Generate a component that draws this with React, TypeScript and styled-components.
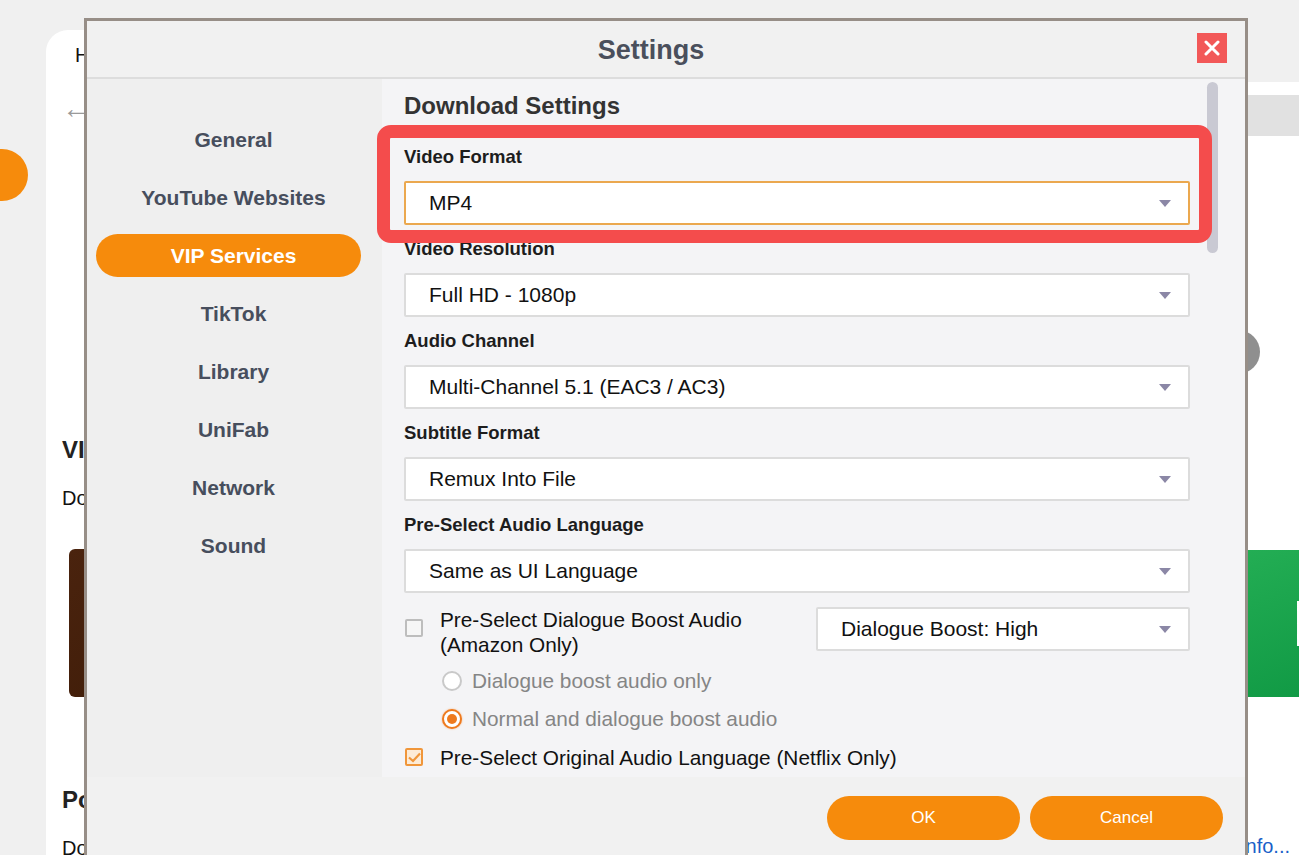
import React from "react";
import styled, { createGlobalStyle } from "styled-components";

const GlobalStyle = createGlobalStyle`
  html, body {
    margin: 0;
    padding: 0;
    background: #f0f0f0;
    font-family: "Liberation Sans", Arial, sans-serif;
    overflow: hidden;
  }
  * { box-sizing: border-box; }
`;

const menuItems = [
  "General",
  "YouTube Websites",
  "VIP Services",
  "TikTok",
  "Library",
  "UniFab",
  "Network",
  "Sound",
];

const selects = [
  { label: "Video Format", value: "MP4", focused: true },
  { label: "Video Resolution", value: "Full HD - 1080p" },
  { label: "Audio Channel", value: "Multi-Channel 5.1 (EAC3 / AC3)" },
  { label: "Subtitle Format", value: "Remux Into File" },
  { label: "Pre-Select Audio Language", value: "Same as UI Language" },
];

/* ---------- page behind the dialog ---------- */

const Page = styled.div`
  position: relative;
  width: 1299px;
  height: 855px;
  display: flex;
  padding: 30px 0 0 46px;
  overflow: hidden;
`;

const LeftPane = styled.div`
  width: 700px;
  background: #fff;
  border-radius: 22px 0 0 0;
  padding: 14px 0 0 16px;
  display: flex;
  flex-direction: column;
  color: #111;
`;

const PaneTab = styled.div`
  font-size: 20px;
  padding-left: 13px;
  height: 26px;
`;

const BackArrow = styled.div`
  margin-top: 22px;
  color: #9a9a9a;
  font-size: 28px;
  line-height: 40px;
  height: 40px;
`;

const PaneHeading = styled.div<{ $top: number }>`
  margin-top: ${(p) => p.$top}px;
  font-size: 24px;
  font-weight: bold;
  color: #222;
  line-height: 30px;
`;

const PaneText = styled.div`
  margin-top: 20px;
  font-size: 20px;
  line-height: 26px;
`;

const Poster = styled.div`
  margin: 38px 0 0 7px;
  width: 200px;
  height: 148px;
  flex-shrink: 0;
  border-radius: 6px;
  background: linear-gradient(135deg, #4a230e, #3b1a06);
`;

const RightPane = styled.div`
  flex: 1;
  margin-top: 52px;
  background: #fff;
  display: flex;
  flex-direction: column;
  position: relative;
`;

const SearchStrip = styled.div`
  margin: 13px 0 0 150px;
  height: 41px;
  background: #e1e1e1;
`;

const Banner = styled.div`
  margin: 414px 0 0 250px;
  height: 147px;
  background: linear-gradient(160deg, #2db85c, #119a45);
  display: flex;
  align-items: center;
  justify-content: flex-end;
  overflow: hidden;
`;

const BannerMark = styled.span`
  color: #fff;
  font-size: 64px;
  font-weight: bold;
  margin-right: -40px;
`;

const MoreLink = styled.div`
  margin-top: auto;
  align-self: flex-end;
  margin-right: 9px;
  color: #1a5fc8;
  font-size: 20px;
  line-height: 24px;
  margin-bottom: -3px;
`;

const CarouselDot = styled.div`
  position: absolute;
  left: 470px;
  top: 248px;
  width: 44px;
  height: 44px;
  border-radius: 50%;
  background: #8f8f8f;
`;

const FloatingBubble = styled.div`
  position: absolute;
  left: -24px;
  top: 149px;
  width: 52px;
  height: 52px;
  border-radius: 50%;
  background: #f68b0c;
`;

/* ---------- dialog ---------- */

const Dialog = styled.div`
  position: absolute;
  left: 84px;
  top: 18px;
  width: 1164px;
  height: 880px;
  border: 3px solid #978e87;
  background: #f1f1f1;
  display: flex;
  flex-direction: column;
`;

const TitleBar = styled.div`
  position: relative;
  height: 58px;
  border-bottom: 2px solid #dddddd;
  display: flex;
  align-items: center;
  justify-content: center;
  padding-right: 30px;
`;

const Title = styled.div`
  font-size: 27px;
  font-weight: bold;
  color: #4a4f5c;
  margin-top: 2px;
`;

const CloseButton = styled.div`
  position: absolute;
  right: 18px;
  top: 12px;
  width: 30px;
  height: 30px;
  background: #f25858;
  display: flex;
  align-items: center;
  justify-content: center;
`;

const Body = styled.div`
  position: relative;
  height: 698px;
  display: flex;
`;

const Sidebar = styled.div`
  width: 295px;
  background: #efefef;
  padding: 39px 21px 0 9px;
  display: flex;
  flex-direction: column;
  gap: 15px;
`;

const MenuItem = styled.div<{ $active?: boolean }>`
  height: 43px;
  border-radius: 22px;
  display: flex;
  align-items: center;
  justify-content: center;
  font-size: 21px;
  font-weight: bold;
  color: ${(p) => (p.$active ? "#fff" : "#474e5d")};
  background: ${(p) => (p.$active ? "#f68b0c" : "transparent")};
  padding-left: 10px;
`;

const Content = styled.div`
  position: relative;
  flex: 1;
  background: #f4f4f6;
  padding: 14px 55px 0 22px;
  overflow: hidden;
`;

const SectionTitle = styled.div`
  font-size: 24px;
  font-weight: bold;
  color: #333;
  line-height: 26px;
  margin-bottom: 28px;
`;

const FieldLabel = styled.div`
  font-size: 18.5px;
  font-weight: bold;
  color: #1d1d1d;
  line-height: 20px;
  margin-bottom: 14px;
`;

const SelectBox = styled.div<{ $focused?: boolean; $width?: number }>`
  height: 44px;
  width: ${(p) => (p.$width ? `${p.$width}px` : "100%")};
  background: #fff;
  border: 2px solid ${(p) => (p.$focused ? "#eba84f" : "#dcdcdc")};
  border-radius: 2px;
  display: flex;
  align-items: center;
  justify-content: space-between;
  padding: 0 17px 0 23px;
  font-size: 21px;
  color: #111;
  margin-bottom: 14px;
  flex-shrink: 0;
`;

const Caret = styled.span`
  width: 0;
  height: 0;
  border-left: 6px solid transparent;
  border-right: 6px solid transparent;
  border-top: 7px solid #8b87a6;
`;

const BoostRow = styled.div`
  display: flex;
  align-items: flex-start;
  justify-content: space-between;
  margin-top: 3px;
`;

const CheckLine = styled.div`
  display: flex;
  align-items: flex-start;
  gap: 17px;
  padding-left: 1px;
  font-size: 20.8px;
  line-height: 25px;
  color: #111;
`;

const BoxMark = styled.div<{ $checked?: boolean }>`
  width: 18px;
  height: 18px;
  flex-shrink: 0;
  margin-top: ${(p) => (p.$checked ? "3px" : "12px")};
  border: 2px solid ${(p) => (p.$checked ? "#f0963a" : "#bdbdbd")};
  background: ${(p) => (p.$checked ? "#fdebd6" : "#f6f6f6")};
  border-radius: 2px;
  display: flex;
  align-items: center;
  justify-content: center;
`;

const RadioList = styled.div`
  display: flex;
  flex-direction: column;
  gap: 12px;
  padding-left: 38px;
  margin: 3px 0 13px;
`;

const RadioLine = styled.div`
  display: flex;
  align-items: center;
  gap: 10px;
  font-size: 20.8px;
  line-height: 26px;
  color: #858585;
`;

const RadioMark = styled.div<{ $on?: boolean }>`
  width: 20px;
  height: 20px;
  border-radius: 50%;
  border: 2px solid ${(p) => (p.$on ? "#ee7a1e" : "#c9c9c9")};
  background: #fff;
  display: flex;
  align-items: center;
  justify-content: center;
  box-shadow: ${(p) => (p.$on ? "0 0 2px #f6b07a" : "none")};
  &::after {
    content: "";
    width: 10px;
    height: 10px;
    border-radius: 50%;
    background: ${(p) => (p.$on ? "#ee7a1e" : "transparent")};
  }
`;

const ScrollThumb = styled.div`
  position: absolute;
  right: 27px;
  top: 3px;
  width: 11px;
  height: 171px;
  border-radius: 6px;
  background: #c9c9d3;
`;

const Highlight = styled.div`
  position: absolute;
  left: 290px;
  top: 46px;
  width: 835px;
  height: 118px;
  border: 13px solid #f44c4c;
  border-radius: 14px;
  pointer-events: none;
`;

const Footer = styled.div`
  display: flex;
  justify-content: flex-end;
  gap: 10px;
  padding: 19px 22px 0 0;
`;

const ActionButton = styled.div`
  width: 193px;
  height: 44px;
  border-radius: 22px;
  background: #f68b0c;
  color: #fff;
  font-size: 17px;
  display: flex;
  align-items: center;
  justify-content: center;
`;

const Select = ({
  value,
  focused,
  width,
}: {
  value: string;
  focused?: boolean;
  width?: number;
}) => (
  <SelectBox $focused={focused} $width={width}>
    <span>{value}</span>
    <Caret />
  </SelectBox>
);

const App = () => {
  return (
    <>
      <GlobalStyle />
      <Page>
        <FloatingBubble />
        <LeftPane>
          <PaneTab>Home</PaneTab>
          <BackArrow>←</BackArrow>
          <PaneHeading $top={306}>VIP</PaneHeading>
          <PaneText>Down</PaneText>
          <Poster />
          <PaneHeading $top={88}>Popular</PaneHeading>
          <PaneText>Down</PaneText>
        </LeftPane>
        <RightPane>
          <SearchStrip />
          <CarouselDot />
          <Banner>
            <BannerMark>D</BannerMark>
          </Banner>
          <MoreLink>More Info...</MoreLink>
        </RightPane>

        <Dialog>
          <TitleBar>
            <Title>Settings</Title>
            <CloseButton>
              <svg width="16" height="16" viewBox="0 0 16 16">
                <path
                  d="M2 2 L14 14 M14 2 L2 14"
                  stroke="#fff"
                  strokeWidth="3"
                  strokeLinecap="round"
                />
              </svg>
            </CloseButton>
          </TitleBar>

          <Body>
            <Sidebar>
              {menuItems.map((item) => (
                <MenuItem key={item} $active={item === "VIP Services"}>
                  {item}
                </MenuItem>
              ))}
            </Sidebar>

            <Content>
              <SectionTitle>Download Settings</SectionTitle>
              {selects.map((s) => (
                <div key={s.label}>
                  <FieldLabel>{s.label}</FieldLabel>
                  <Select value={s.value} focused={s.focused} />
                </div>
              ))}

              <BoostRow>
                <CheckLine>
                  <BoxMark />
                  <div>
                    Pre-Select Dialogue Boost Audio
                    <br />
                    (Amazon Only)
                  </div>
                </CheckLine>
                <Select value="Dialogue Boost: High" width={374} />
              </BoostRow>

              <RadioList>
                <RadioLine>
                  <RadioMark />
                  Dialogue boost audio only
                </RadioLine>
                <RadioLine>
                  <RadioMark $on />
                  Normal and dialogue boost audio
                </RadioLine>
              </RadioList>

              <CheckLine>
                <BoxMark $checked>
                  <svg width="13" height="11" viewBox="0 0 13 11">
                    <path
                      d="M1 5.5 L5 9 L12 1.5"
                      fill="none"
                      stroke="#f0963a"
                      strokeWidth="2.2"
                    />
                  </svg>
                </BoxMark>
                <div>Pre-Select Original Audio Language (Netflix Only)</div>
              </CheckLine>

              <ScrollThumb />
            </Content>

            <Highlight />
          </Body>

          <Footer>
            <ActionButton>OK</ActionButton>
            <ActionButton>Cancel</ActionButton>
          </Footer>
        </Dialog>
      </Page>
    </>
  );
};

export default App;
